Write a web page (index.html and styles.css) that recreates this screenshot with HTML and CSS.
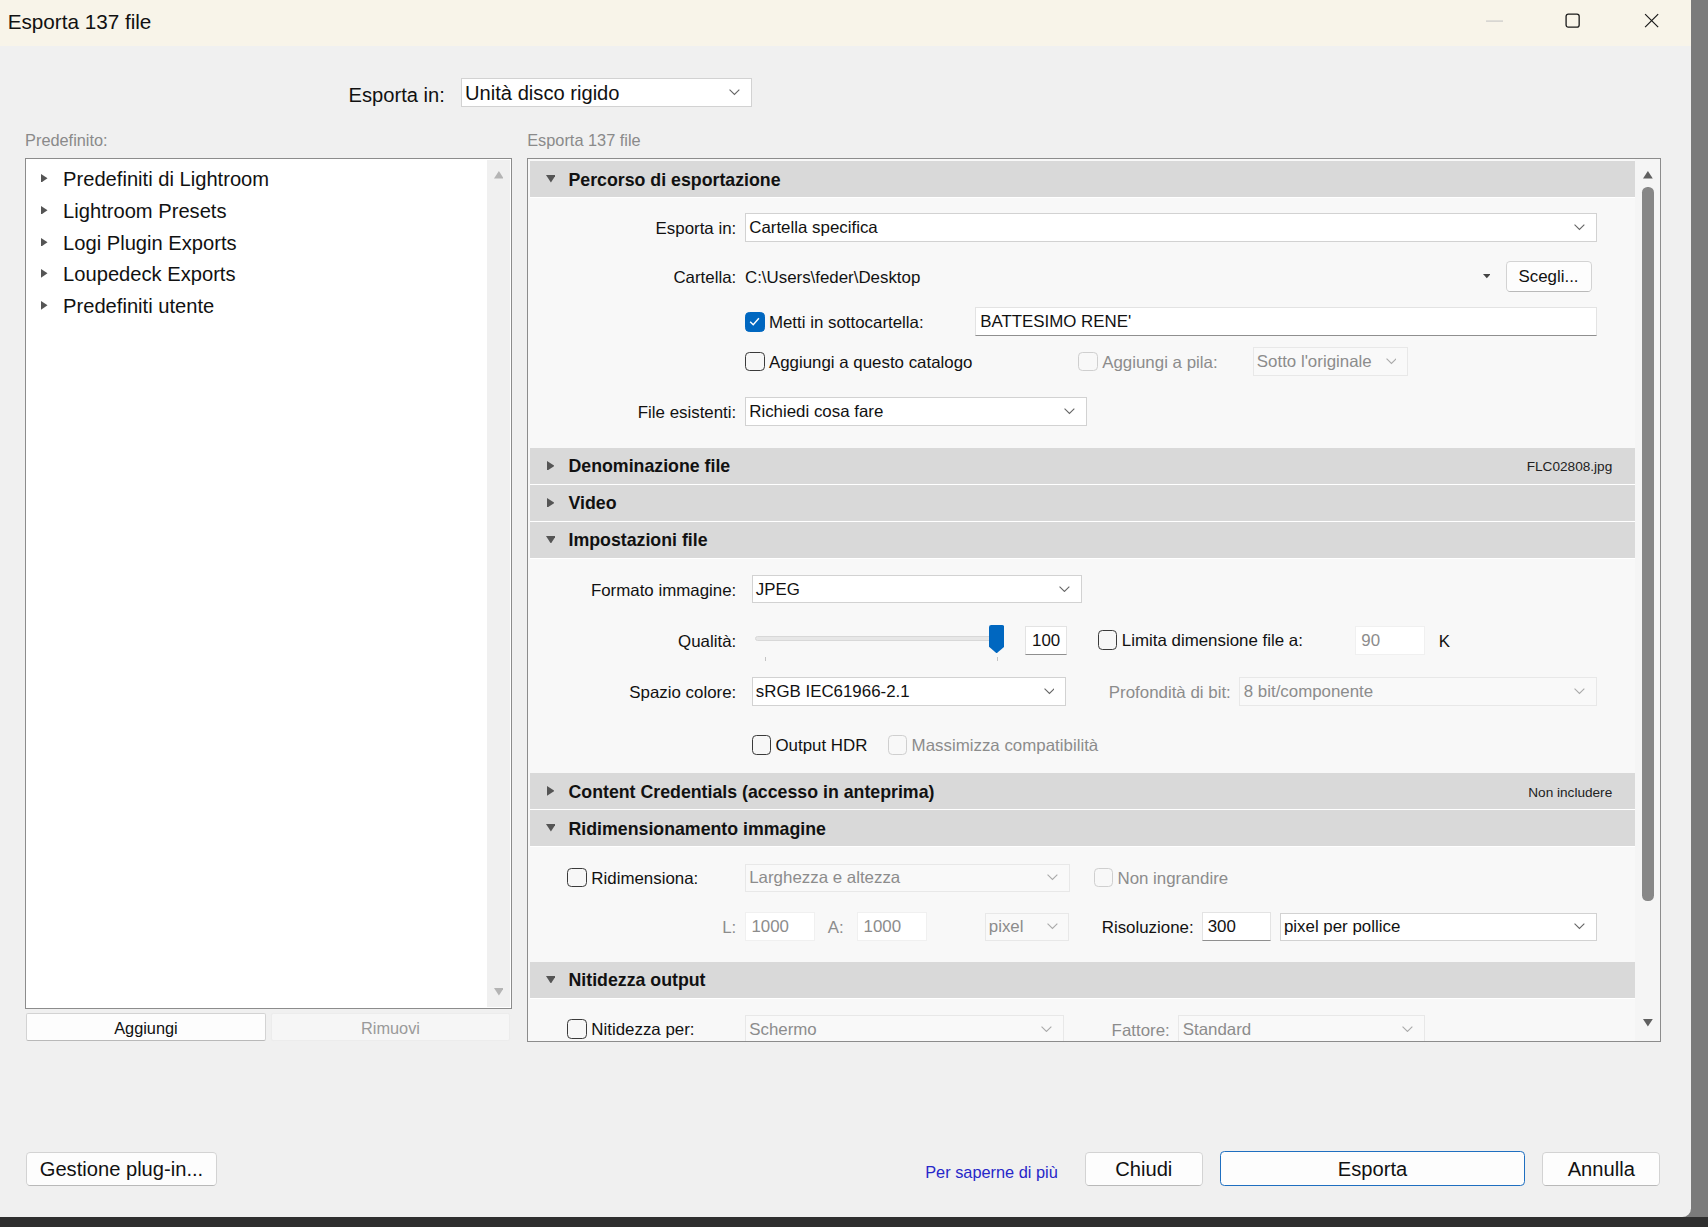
FILE: index.html
```html
<!DOCTYPE html>
<html lang="it">
<head>
<meta charset="utf-8">
<title>Esporta 137 file</title>
<link rel="stylesheet" href="styles.css">
</head>
<body>
<div class="screen">
  <div class="window">
    <div class="titlebar">
      <div class="title">Esporta 137 file</div>
      <div class="winctl"><svg width="16" height="2" viewBox="0 0 16 2"><line x1="0" y1="1" x2="16" y2="1" stroke="#c4c4c4" stroke-width="1"/></svg></div>
      <div class="winctl"><svg width="14" height="14" viewBox="0 0 14 14"><rect x="1" y="1" width="12" height="12" rx="2" fill="none" stroke="#1a1a1a" stroke-width="1.2"/></svg></div>
      <div class="winctl"><svg width="14" height="14" viewBox="0 0 14 14"><path d="M1 1 L13 13 M13 1 L1 13" stroke="#1a1a1a" stroke-width="1.1"/></svg></div>
    </div>

    <div class="top-row">
      <span class="top-label">Esporta in:</span>
      <div class="sel sel-top"><span class="v">Unità disco rigido</span><svg class="chev" width="10" height="6" viewBox="0 0 10 6"><path d="M0.5 0.5 L5 5 L9.5 0.5" fill="none" stroke="#666" stroke-width="1"/></svg></div>
    </div>

    <div class="columns">
      <div class="left-col">
        <div class="caption">Predefinito:</div>
        <div class="listbox">
          <ul class="tree">
            <li><svg class="tri" width="6" height="8" viewBox="0 0 6 8"><polygon points="0,0 6,4 0,8" fill="#555"/></svg><span>Predefiniti di Lightroom</span></li>
            <li><svg class="tri" width="6" height="8" viewBox="0 0 6 8"><polygon points="0,0 6,4 0,8" fill="#555"/></svg><span>Lightroom Presets</span></li>
            <li><svg class="tri" width="6" height="8" viewBox="0 0 6 8"><polygon points="0,0 6,4 0,8" fill="#555"/></svg><span>Logi Plugin Exports</span></li>
            <li><svg class="tri" width="6" height="8" viewBox="0 0 6 8"><polygon points="0,0 6,4 0,8" fill="#555"/></svg><span>Loupedeck Exports</span></li>
            <li><svg class="tri" width="6" height="8" viewBox="0 0 6 8"><polygon points="0,0 6,4 0,8" fill="#555"/></svg><span>Predefiniti utente</span></li>
          </ul>
          <div class="vscroll-left">
            <svg width="9" height="7" viewBox="0 0 9 7"><polygon points="0,7 9,7 4.5,0" fill="#b4b4b4"/></svg>
            <svg width="9" height="7" viewBox="0 0 9 7"><polygon points="0,0 9,0 4.5,7" fill="#b4b4b4"/></svg>
          </div>
        </div>
        <div class="list-buttons">
          <div class="btn btn-add">Aggiungi</div>
          <div class="btn btn-rem">Rimuovi</div>
        </div>
      </div>

      <div class="right-col">
        <div class="caption">Esporta 137 file</div>
        <div class="panel">
          <div class="panel-content">

            <div class="section-head"><svg class="htri-open" width="9" height="7" viewBox="0 0 9 7"><polygon points="0,0 9,0 4.5,7" fill="#555"/></svg><span class="ht">Percorso di esportazione</span></div>
            <div class="sec-body pb-20">
              <div class="row mt-14">
                <span class="lbl">Esporta in:</span>
                <div class="sel w-782"><span class="v">Cartella specifica</span><svg class="chev" width="10" height="6" viewBox="0 0 10 6"><path d="M0.5 0.5 L5 5 L9.5 0.5" fill="none" stroke="#666" stroke-width="1"/></svg></div>
              </div>
              <div class="row row-28 mt-18">
                <span class="lbl">Cartella:</span>
                <span class="path">C:\Users\feder\Desktop</span>
                <svg class="mini-tri" width="7" height="4" viewBox="0 0 7 4"><polygon points="0,0 7,0 3.5,4" fill="#444"/></svg>
                <div class="btn btn-choose">Scegli...</div>
              </div>
              <div class="row row-27 mt-14">
                <label class="chk w-211 ml-197"><span class="cb on"><svg width="12" height="10" viewBox="0 0 12 10"><path d="M2 5.2 L4.8 8 L10 2" fill="none" stroke="#fff" stroke-width="1.3"/></svg></span><span class="ct">Metti in sottocartella:</span></label>
                <div class="inp w-571">BATTESIMO RENE'</div>
              </div>
              <div class="row mt-10">
                <label class="chk w-306 ml-197"><span class="cb"></span><span class="ct">Aggiungi a questo catalogo</span></label>
                <label class="chk dis w-160"><span class="cb"></span><span class="ct">Aggiungi a pila:</span></label>
                <div class="sel dis w-143"><span class="v">Sotto l'originale</span><svg class="chev" width="10" height="6" viewBox="0 0 10 6"><path d="M0.5 0.5 L5 5 L9.5 0.5" fill="none" stroke="#aaa" stroke-width="1"/></svg></div>
              </div>
              <div class="row mt-20">
                <span class="lbl">File esistenti:</span>
                <div class="sel w-314"><span class="v">Richiedi cosa fare</span><svg class="chev" width="10" height="6" viewBox="0 0 10 6"><path d="M0.5 0.5 L5 5 L9.5 0.5" fill="none" stroke="#666" stroke-width="1"/></svg></div>
              </div>
            </div>

            <div class="section-head"><svg class="htri" width="7" height="9" viewBox="0 0 7 9"><polygon points="0,0 7,4.5 0,9" fill="#555"/></svg><span class="ht">Denominazione file</span><span class="head-note">FLC02808.jpg</span></div>
            <div class="section-head"><svg class="htri" width="7" height="9" viewBox="0 0 7 9"><polygon points="0,0 7,4.5 0,9" fill="#555"/></svg><span class="ht">Video</span></div>

            <div class="section-head"><svg class="htri-open" width="9" height="7" viewBox="0 0 9 7"><polygon points="0,0 9,0 4.5,7" fill="#555"/></svg><span class="ht">Impostazioni file</span></div>
            <div class="sec-body pb-13">
              <div class="row mt-15">
                <span class="lbl lbl-wide">Formato immagine:</span>
                <div class="sel w-303"><span class="v">JPEG</span><svg class="chev" width="10" height="6" viewBox="0 0 10 6"><path d="M0.5 0.5 L5 5 L9.5 0.5" fill="none" stroke="#666" stroke-width="1"/></svg></div>
              </div>
              <div class="row row-28 mt-20">
                <span class="lbl lbl-slider">Qualità:</span>
                <div class="slider">
                  <div class="track"></div>
                  <span class="tick tick-a"></span>
                  <span class="tick tick-b"></span>
                  <svg class="thumb" width="14" height="26" viewBox="0 0 14 26"><path d="M2 0 H12 Q14 0 14 2 V20 L7 26 L0 20 V2 Q0 0 2 0 Z" fill="#0067c0"/></svg>
                </div>
                <div class="inp inp-num">100</div>
                <label class="chk w-236 ml-28"><span class="cb"></span><span class="ct">Limita dimensione file a:</span></label>
                <div class="inp inp-dis w-64">90</div>
                <span class="unit">K</span>
              </div>
              <div class="row mt-20">
                <span class="lbl lbl-wide">Spazio colore:</span>
                <div class="sel w-289"><span class="v">sRGB IEC61966-2.1</span><svg class="chev" width="10" height="6" viewBox="0 0 10 6"><path d="M0.5 0.5 L5 5 L9.5 0.5" fill="none" stroke="#666" stroke-width="1"/></svg></div>
                <span class="lbl-inline dis w-151">Profondità di bit:</span>
                <div class="sel dis w-328"><span class="v">8 bit/componente</span><svg class="chev" width="10" height="6" viewBox="0 0 10 6"><path d="M0.5 0.5 L5 5 L9.5 0.5" fill="none" stroke="#aaa" stroke-width="1"/></svg></div>
              </div>
              <div class="row mt-23">
                <label class="chk w-125 ml-203"><span class="cb"></span><span class="ct">Output HDR</span></label>
                <label class="chk dis"><span class="cb"></span><span class="ct">Massimizza compatibilità</span></label>
              </div>
            </div>

            <div class="section-head"><svg class="htri" width="7" height="9" viewBox="0 0 7 9"><polygon points="0,0 7,4.5 0,9" fill="#555"/></svg><span class="ht">Content Credentials (accesso in anteprima)</span><span class="head-note">Non includere</span></div>

            <div class="section-head"><svg class="htri-open" width="9" height="7" viewBox="0 0 9 7"><polygon points="0,0 9,0 4.5,7" fill="#555"/></svg><span class="ht">Ridimensionamento immagine</span></div>
            <div class="sec-body pb-18">
              <div class="row mt-15">
                <label class="chk w-163 ml-34"><span class="cb"></span><span class="ct">Ridimensiona:</span></label>
                <div class="sel dis w-298"><span class="v">Larghezza e altezza</span><svg class="chev" width="10" height="6" viewBox="0 0 10 6"><path d="M0.5 0.5 L5 5 L9.5 0.5" fill="none" stroke="#aaa" stroke-width="1"/></svg></div>
                <label class="chk dis ml-22"><span class="cb"></span><span class="ct">Non ingrandire</span></label>
              </div>
              <div class="row row-28 mt-18">
                <span class="lbl dis">L:</span>
                <div class="inp inp-dis w-64">1000</div>
                <span class="dim-l dis">A:</span>
                <div class="inp inp-dis w-64">1000</div>
                <div class="sel dis w-78 ml-53"><span class="v">pixel</span><svg class="chev" width="10" height="6" viewBox="0 0 10 6"><path d="M0.5 0.5 L5 5 L9.5 0.5" fill="none" stroke="#aaa" stroke-width="1"/></svg></div>
                <span class="lbl-inline w-114">Risoluzione:</span>
                <div class="inp w-63">300</div>
                <div class="sel w-291 ml-8"><span class="v">pixel per pollice</span><svg class="chev" width="10" height="6" viewBox="0 0 10 6"><path d="M0.5 0.5 L5 5 L9.5 0.5" fill="none" stroke="#666" stroke-width="1"/></svg></div>
              </div>
            </div>

            <div class="section-head"><svg class="htri-open" width="9" height="7" viewBox="0 0 9 7"><polygon points="0,0 9,0 4.5,7" fill="#555"/></svg><span class="ht">Nitidezza output</span></div>
            <div class="sec-body">
              <div class="row mt-15">
                <label class="chk w-163 ml-34"><span class="cb"></span><span class="ct">Nitidezza per:</span></label>
                <div class="sel dis w-293"><span class="v">Schermo</span><svg class="chev" width="10" height="6" viewBox="0 0 10 6"><path d="M0.5 0.5 L5 5 L9.5 0.5" fill="none" stroke="#aaa" stroke-width="1"/></svg></div>
                <span class="lbl-inline dis w-97">Fattore:</span>
                <div class="sel dis w-226"><span class="v">Standard</span><svg class="chev" width="10" height="6" viewBox="0 0 10 6"><path d="M0.5 0.5 L5 5 L9.5 0.5" fill="none" stroke="#aaa" stroke-width="1"/></svg></div>
              </div>
            </div>

          </div>
          <div class="vscroll-right">
            <svg class="arr" width="9" height="7" viewBox="0 0 9 7"><polygon points="0,7 9,7 4.5,0" fill="#606060"/></svg>
            <div class="thumb-bar"></div>
            <svg class="arr arr-down" width="9" height="7" viewBox="0 0 9 7"><polygon points="0,0 9,0 4.5,7" fill="#606060"/></svg>
          </div>
        </div>
      </div>
    </div>

    <div class="footer">
      <div class="btn btn-foot btn-plugin">Gestione plug-in...</div>
      <div class="spacer"></div>
      <span class="link">Per saperne di più</span>
      <div class="btn btn-foot btn-close">Chiudi</div>
      <div class="btn btn-foot btn-export">Esporta</div>
      <div class="btn btn-foot btn-cancel">Annulla</div>
    </div>
  </div>
</div>
</body>
</html>
```

FILE: styles.css
```css
* { box-sizing: border-box; }
html, body { margin: 0; padding: 0; }
body {
  background: #2f2f2f;
  font-family: "Liberation Sans", Arial, sans-serif;
  color: #111;
}
.screen {
  zoom: 1.0893;
  width: 1568px;
  height: 1126px;
  overflow: hidden;
  background: linear-gradient(#7b7b7b 0, #7b7b7b 1117px, #2f2f2f 1117px);
}
.window {
  width: 1552px;
  height: 1117px;
  background: #f0f0f0;
  border-bottom-right-radius: 8px;
  display: flex;
  flex-direction: column;
  overflow: hidden;
}

/* title bar */
.titlebar {
  height: 42px;
  flex-shrink: 0;
  background: #f8f4e9;
  display: flex;
  align-items: center;
  padding-left: 7px;
}
.title { flex: 1; font-size: 19px; color: #111; padding-bottom: 1px; }
.winctl {
  width: 72px;
  height: 42px;
  display: flex;
  align-items: center;
  justify-content: center;
  padding-bottom: 4px;
}

/* top row */
.top-row {
  margin-top: 29px;
  height: 28px;
  display: flex;
  align-items: center;
  padding-left: 320px;
}
.top-label { font-size: 18.5px; width: 103px; padding-top: 5px; }
.sel-top { width: 267px; height: 28px; font-size: 18.5px; }

/* columns */
.columns { display: flex; padding-left: 23px; gap: 14px; }
.left-col { width: 447px; }
.right-col { width: 1041px; }
.caption {
  margin-top: 19px;
  height: 19px;
  line-height: 19px;
  margin-bottom: 8px;
  font-size: 15px;
  color: #8a8a8a;
  padding-top: 1px;
}

.listbox {
  height: 781px;
  background: #fff;
  border: 1px solid #8c8c8c;
  display: flex;
}
.tree { flex: 1; list-style: none; margin: 0; padding: 3px 0 0 0; }
.tree li {
  height: 29.3px;
  display: flex;
  align-items: center;
  padding-left: 14px;
  font-size: 18.5px;
  color: #111;
}
.tree li span { padding-top: 2px; }
.tree .tri { margin-right: 14px; flex-shrink: 0; }
.vscroll-left {
  width: 21px;
  margin: 1px 1px 1px 0;
  background: #f0f0f0;
  display: flex;
  flex-direction: column;
  justify-content: space-between;
  align-items: center;
  padding: 10px 0 10px 0;
}

.list-buttons { display: flex; gap: 5px; margin-top: 4px; padding-left: 1px; }
.btn {
  display: flex;
  align-items: center;
  justify-content: center;
  background: #fdfdfd;
  border: 1px solid #d3d3d3;
  border-bottom-color: #b9b9b9;
  border-radius: 4px;
  color: #111;
}
.btn-add { width: 220px; height: 26px; font-size: 15px; border-radius: 2px; padding-top: 2px; }
.btn-rem {
  width: 219px; height: 26px; font-size: 15px; padding-top: 2px;
  background: #f6f6f6; border-color: #ececec; color: #9a9a9a; border-radius: 2px;
}

/* export panel */
.panel {
  height: 812px;
  border: 1px solid #8c8c8c;
  background: #f8f8f8;
  display: flex;
}
.panel-content {
  flex: 1;
  padding: 2px 0 0 2px;
  overflow: hidden;
  font-size: 15.5px;
}
.section-head {
  height: 34px;
  background: #d9d9d9;
  border-bottom: 1px solid #fff;
  display: flex;
  align-items: center;
  padding-left: 14px;
  padding-right: 21px;
  font-weight: bold;
  font-size: 16.3px;
  color: #111;
}
.ht { padding-top: 2px; }
.htri-open { margin-right: 12px; flex-shrink: 0; }
.htri { margin-left: 1px; margin-right: 13px; flex-shrink: 0; }
.head-note { margin-left: auto; font-weight: normal; font-size: 12.5px; color: #222; padding-top: 2px; }

.row { display: flex; align-items: center; height: 26px; white-space: nowrap; }
.row-28 { height: 28px; }
.row-27 { height: 27px; }
.lbl { width: 189px; text-align: right; margin-right: 8px; flex-shrink: 0; padding-top: 3px; }
.lbl-wide { margin-right: 14px; }
.lbl-slider { margin-right: 17px; }
.lbl-inline { text-align: right; margin-right: 8px; flex-shrink: 0; padding-top: 3px; }
.ct { padding-top: 2px; }
.dis { color: #8c8c8c; }
.path { flex: 1; padding-top: 3px; }
.mini-tri { margin-right: 14px; }
.btn-choose { width: 79px; height: 28px; font-size: 15.5px; margin-right: 40px; padding-top: 1px; }
.unit { margin-left: 13px; padding-top: 3px; }
.dim-l { margin: 0 12px; width: 15px; padding-top: 3px; }

.mt-10 { margin-top: 10px; }
.mt-14 { margin-top: 14px; }
.mt-15 { margin-top: 15px; }
.mt-18 { margin-top: 18px; }
.mt-20 { margin-top: 20px; }
.mt-23 { margin-top: 23px; }
.pb-13 { padding-bottom: 13px; }
.pb-18 { padding-bottom: 18px; }
.pb-20 { padding-bottom: 20px; }
.ml-8 { margin-left: 8px; }
.ml-22 { margin-left: 22px; }
.ml-28 { margin-left: 28px; }
.ml-34 { margin-left: 34px; }
.ml-53 { margin-left: 53px; }
.ml-197 { margin-left: 197px; }
.ml-203 { margin-left: 203px; }

.w-63 { width: 63px; }
.w-64 { width: 64px; }
.w-78 { width: 78px; }
.w-97 { width: 97px; }
.w-114 { width: 114px; }
.w-125 { width: 125px; }
.w-143 { width: 143px; }
.w-151 { width: 151px; }
.w-160 { width: 160px; }
.w-163 { width: 163px; }
.w-211 { width: 211px; }
.w-226 { width: 226px; }
.w-236 { width: 236px; }
.w-289 { width: 289px; }
.w-291 { width: 291px; }
.w-293 { width: 293px; }
.w-298 { width: 298px; }
.w-303 { width: 303px; }
.w-306 { width: 306px; }
.w-314 { width: 314px; }
.w-328 { width: 328px; }
.w-571 { width: 571px; }
.w-782 { width: 782px; }

/* select */
.sel {
  height: 26px;
  background: #fff;
  border: 1px solid #d2d2d2;
  display: flex;
  align-items: center;
  padding: 0 10px 0 3px;
  flex-shrink: 0;
}
.sel .v { flex: 1; padding-top: 1px; }
.sel.dis { background: #f9f9f9; border-color: #e8e8e8; color: #8c8c8c; }
.chev { flex-shrink: 0; }

/* checkbox */
.chk { display: flex; align-items: center; flex-shrink: 0; }
.cb {
  width: 18px;
  height: 18px;
  border: 1px solid #3a3a3a;
  border-radius: 4px;
  background: #f7f7f7;
  margin-right: 4px;
  display: flex;
  align-items: center;
  justify-content: center;
  flex-shrink: 0;
}
.cb.on { background: #0067c0; border-color: #0067c0; }
.chk.dis .cb { border-color: #cfcfcf; background: #f8f8f8; }

/* inputs */
.inp {
  height: 27px;
  background: #fff;
  border: 1px solid #e3e3e3;
  border-bottom: 1px solid #8f8f8f;
  display: flex;
  align-items: center;
  padding: 1px 0 0 4px;
  flex-shrink: 0;
}
.inp-num { width: 39px; margin-left: 19px; justify-content: center; padding-left: 0; }
.inp-dis { border-color: #f0f0f0; color: #8c8c8c; padding-left: 5px; }

/* slider */
.slider { position: relative; width: 229px; height: 28px; flex-shrink: 0; }
.track {
  position: absolute;
  left: 0; right: 0; top: 10px;
  height: 5px;
  background: #e7e7e7;
  border: 1px solid #d8d8d8;
  border-radius: 3px;
}
.thumb { position: absolute; left: 215px; top: 0; }
.tick { position: absolute; top: 29px; width: 1px; height: 4px; background: #c4c4c4; }
.tick-a { left: 9px; }
.tick-b { left: 222px; }

/* right scrollbar */
.vscroll-right {
  width: 23px;
  background: #f5f5f5;
  display: flex;
  flex-direction: column;
  align-items: center;
  padding-top: 11px;
}
.thumb-bar {
  width: 11px;
  height: 655px;
  margin-top: 8px;
  background: #878787;
  border-radius: 5px;
}
.arr-down { margin-top: 109px; }

/* footer */
.footer {
  margin-top: 100px;
  display: flex;
  align-items: center;
  padding: 0 28px 0 24px;
}
.spacer { flex: 1; }
.btn-foot { height: 31px; font-size: 18.5px; padding-top: 2px; }
.btn-plugin { width: 175px; }
.link { font-size: 15px; color: #2727c9; margin-right: 25px; padding-top: 6px; }
.btn-close { width: 108px; }
.btn-export { width: 280px; height: 32px; margin-left: 16px; border: 1px solid #1f6fc0; }
.btn-cancel { width: 108px; margin-left: 16px; }
```
